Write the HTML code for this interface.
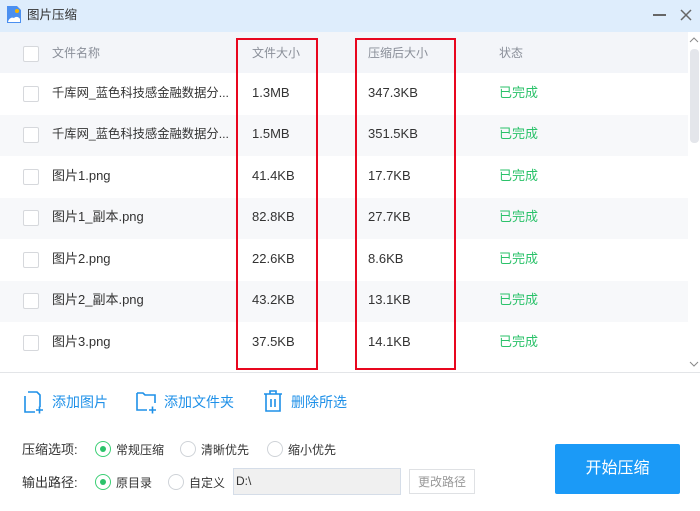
<!DOCTYPE html>
<html><head><meta charset="utf-8"><style>
*{margin:0;padding:0;box-sizing:border-box}
body{width:700px;height:511px;background:#fff;font-family:"Liberation Sans","Noto Sans CJK SC",sans-serif;position:relative;overflow:hidden;color:#333}
.a{position:absolute}
.t{font-size:13px;white-space:nowrap;line-height:18px;height:18px}
.cb{position:absolute;width:16px;height:16px;border:1px solid #d6d8dc;background:#fff;border-radius:2px}
.row{position:absolute;left:0;width:688px;height:41.5px}
.g{color:#2bc26a}
.h{color:#8a8f99;font-size:12px}
.rb{position:absolute;width:16px;height:16px;border:1px solid #cfd3d8;border-radius:50%;background:#fff}
.rb.on{border-color:#3ccf75}
.rb.on::after{content:"";position:absolute;left:4px;top:4px;width:6px;height:6px;border-radius:50%;background:#2bc26a}
.blue{color:#1e90e8}
.n{font-size:12.3px}
</style></head><body>
<div class="a" style="left:0;top:0;width:700px;height:32px;background:#deedfc"></div>
<svg class="a" style="left:6px;top:5px" width="16" height="19" viewBox="0 0 16 19"><path d="M1 1h10l4 4v13H1z" fill="#4a8ff0"/><circle cx="11" cy="6" r="2" fill="#f5b400"/><path d="M2 17c1-4 4-5 6-4 2-2 5-1 6 1v3z" fill="#fff"/></svg>
<div class="a t" style="left:27px;top:6px;font-size:12.5px;color:#333">图片压缩</div>
<div class="a" style="left:653px;top:14px;width:13px;height:1.5px;background:#666"></div>
<svg class="a" style="left:679px;top:8px" width="14" height="14"><path d="M2 2L12 12M12 2L2 12" stroke="#666" stroke-width="1.5"/></svg>

<div class="a" style="left:0;top:32px;width:688px;height:41px;background:#f3f5f9"></div>
<div class="cb" style="left:23px;top:46px"></div>
<div class="a t h" style="left:52px;top:44px">文件名称</div>
<div class="a t h" style="left:252px;top:44px">文件大小</div>
<div class="a t h" style="left:368px;top:44px">压缩后大小</div>
<div class="a t h" style="left:499px;top:44px">状态</div>

<div class="row" style="top:73px;background:#fff"></div>
<div class="row" style="top:114.5px;background:#f7f8fa"></div>
<div class="row" style="top:156px;background:#fff"></div>
<div class="row" style="top:197.5px;background:#f7f8fa"></div>
<div class="row" style="top:239px;background:#fff"></div>
<div class="row" style="top:280.5px;background:#f7f8fa"></div>
<div class="row" style="top:322px;background:#fff"></div>

<div class="cb" style="left:23px;top:86px"></div><div class="a t n" style="left:52px;top:84px">千库网_蓝色科技感金融数据分...</div><div class="a t" style="left:252px;top:84px">1.3MB</div><div class="a t" style="left:368px;top:84px">347.3KB</div><div class="a t g" style="left:499px;top:84px">已完成</div>
<div class="cb" style="left:23px;top:127px"></div><div class="a t n" style="left:52px;top:125px">千库网_蓝色科技感金融数据分...</div><div class="a t" style="left:252px;top:125px">1.5MB</div><div class="a t" style="left:368px;top:125px">351.5KB</div><div class="a t g" style="left:499px;top:125px">已完成</div>
<div class="cb" style="left:23px;top:169px"></div><div class="a t" style="left:52px;top:167px">图片1.png</div><div class="a t" style="left:252px;top:167px">41.4KB</div><div class="a t" style="left:368px;top:167px">17.7KB</div><div class="a t g" style="left:499px;top:167px">已完成</div>
<div class="cb" style="left:23px;top:210px"></div><div class="a t" style="left:52px;top:208px">图片1_副本.png</div><div class="a t" style="left:252px;top:208px">82.8KB</div><div class="a t" style="left:368px;top:208px">27.7KB</div><div class="a t g" style="left:499px;top:208px">已完成</div>
<div class="cb" style="left:23px;top:252px"></div><div class="a t" style="left:52px;top:250px">图片2.png</div><div class="a t" style="left:252px;top:250px">22.6KB</div><div class="a t" style="left:368px;top:250px">8.6KB</div><div class="a t g" style="left:499px;top:250px">已完成</div>
<div class="cb" style="left:23px;top:293px"></div><div class="a t" style="left:52px;top:291px">图片2_副本.png</div><div class="a t" style="left:252px;top:291px">43.2KB</div><div class="a t" style="left:368px;top:291px">13.1KB</div><div class="a t g" style="left:499px;top:291px">已完成</div>
<div class="cb" style="left:23px;top:335px"></div><div class="a t" style="left:52px;top:333px">图片3.png</div><div class="a t" style="left:252px;top:333px">37.5KB</div><div class="a t" style="left:368px;top:333px">14.1KB</div><div class="a t g" style="left:499px;top:333px">已完成</div>

<div class="a" style="left:688px;top:32px;width:12px;height:341px;background:#fff"></div>
<svg class="a" style="left:689px;top:36px" width="10" height="8"><path d="M1 6L5 2L9 6" stroke="#888" fill="none"/></svg>
<div class="a" style="left:690px;top:49px;width:9px;height:94px;background:#e4e6eb;border-radius:4px"></div>
<svg class="a" style="left:689px;top:360px" width="10" height="8"><path d="M1 2L5 6L9 2" stroke="#888" fill="none"/></svg>
<div class="a" style="left:0;top:372px;width:700px;height:1px;background:#e3e5e8"></div>

<div class="a" style="left:236px;top:38px;width:82px;height:332px;border:2px solid #e8061e"></div>
<div class="a" style="left:355px;top:38px;width:101px;height:332px;border:2px solid #e8061e"></div>

<svg class="a" style="left:24px;top:390px" width="20" height="24"><path d="M4 2h9l3 3v12M1 6v16h10" stroke="#1e90e8" stroke-width="1.6" fill="none"/><path d="M12 20h7M15.5 16.5v7" stroke="#1e90e8" stroke-width="1.6"/></svg>
<div class="a t blue" style="left:52px;top:393px;font-size:14px">添加图片</div>
<svg class="a" style="left:136px;top:390px" width="22" height="24"><path d="M1 3h6l2 2h10v8M1 3v17h10" stroke="#1e90e8" stroke-width="1.6" fill="none"/><path d="M13 20h7M16.5 16.5v7" stroke="#1e90e8" stroke-width="1.6"/></svg>
<div class="a t blue" style="left:164px;top:393px;font-size:14px">添加文件夹</div>
<svg class="a" style="left:263px;top:389px" width="20" height="24"><path d="M1 5h18M7 5V2h6v3M3 5v17h14V5M8 10v8M12 10v8" stroke="#1e90e8" stroke-width="1.6" fill="none"/></svg>
<div class="a t blue" style="left:291px;top:393px;font-size:14px">删除所选</div>

<div class="a t" style="left:22px;top:441px">压缩选项:</div>
<div class="rb on" style="left:95px;top:441px"></div><div class="a t" style="left:116px;top:441px;font-size:12px">常规压缩</div>
<div class="rb" style="left:180px;top:441px"></div><div class="a t" style="left:201px;top:441px;font-size:12px">清晰优先</div>
<div class="rb" style="left:267px;top:441px"></div><div class="a t" style="left:288px;top:441px;font-size:12px">缩小优先</div>
<div class="a t" style="left:22px;top:474px">输出路径:</div>
<div class="rb on" style="left:95px;top:474px"></div><div class="a t" style="left:116px;top:474px;font-size:12px">原目录</div>
<div class="rb" style="left:168px;top:474px"></div><div class="a t" style="left:189px;top:474px;font-size:12px">自定义</div>
<div class="a" style="left:233px;top:468px;width:168px;height:27px;background:#f0f0f0;border:1px solid #d5dde8"></div>
<div class="a t" style="left:236px;top:472px;font-size:12px">D:\</div>
<div class="a" style="left:409px;top:469px;width:66px;height:25px;border:1px solid #dfe1e4;background:#fff"></div>
<div class="a t" style="left:418px;top:473px;font-size:12px;color:#999">更改路径</div>
<div class="a" style="left:555px;top:444px;width:125px;height:50px;background:#1b9af7;border-radius:2px;color:#fff;font-size:16px;text-align:center;line-height:50px">开始压缩</div>
</body></html>
